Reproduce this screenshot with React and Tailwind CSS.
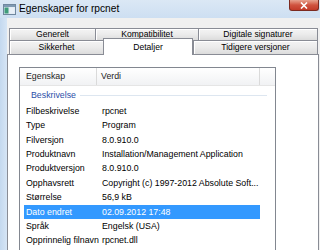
import React from "react";

const rows = [
  ["Filbeskrivelse", "rpcnet"],
  ["Type", "Program"],
  ["Filversjon", "8.0.910.0"],
  ["Produktnavn", "Installation/Management Application"],
  ["Produktversjon", "8.0.910.0"],
  ["Opphavsrett", "Copyright (c) 1997-2012 Absolute Soft..."],
  ["Størrelse", "56,9 kB"],
  ["Dato endret", "02.09.2012 17:48", true],
  ["Språk", "Engelsk (USA)"],
  ["Opprinnelig filnavn", "rpcnet.dll"],
];

function Tab({ w, children, last }) {
  return (
    <div
      className={`h-full flex items-center justify-center border-t border-l border-[#898c95] bg-gradient-to-b from-[#f4f4f4] via-[#ebebeb] to-[#dcdcdc] shadow-[inset_1px_1px_0_#ffffff] ${last ? "border-r" : ""}`}
      style={{ width: w }}
    >
      <span className="text-[8.6px] leading-none text-black">{children}</span>
    </div>
  );
}

export default function App() {
  return (
    <div
      className="w-[320px] h-[250px] overflow-hidden bg-[#cfe0f3] flex flex-col"
      style={{ fontFamily: '"Liberation Sans", Arial, sans-serif' }}
    >
      {/* title bar */}
      <div className="h-[18px] flex items-start shrink-0 bg-gradient-to-b from-[#dbe8f5] to-[#cddff2]">
        <div className="pl-[3px] pt-[4px]">
          <svg width="13" height="11" viewBox="0 0 13 11">
            <rect x="0.5" y="0.5" width="12" height="10" fill="#dfe9f3" stroke="#6f879e" />
            <rect x="1" y="1" width="11" height="2" fill="#7f9ab3" />
            <rect x="1.5" y="3.5" width="4" height="6" fill="#3f9c7a" />
            <rect x="6.5" y="3.5" width="5" height="6" fill="#e8f0f7" />
          </svg>
        </div>
        <span className="ml-[3px] mt-[3px] text-[10.2px] leading-[12px] text-black">
          Egenskaper for rpcnet
        </span>
        <div className="ml-auto mr-[1px] w-[30px] h-[11px] rounded-b-[3px] border border-t-0 border-[#7c2a20] bg-gradient-to-b from-[#e6a28f] via-[#d0533f] to-[#c23a28] flex items-center justify-center">
          <svg width="8" height="7" viewBox="0 0 8 7">
            <path d="M1 0.5 L7 6.5 M7 0.5 L1 6.5" stroke="#ffffff" strokeWidth="1.6" />
          </svg>
        </div>
      </div>

      {/* body */}
      <div className="flex flex-1 min-h-0">
        <div className="w-[7px] shrink-0 bg-gradient-to-r from-[#c4d9ef] to-[#d6e5f5]" />
        <div className="flex-1 bg-[#f0f0f0] flex flex-col pt-[10px] min-w-0">
          {/* tab row 1 */}
          <div className="flex h-[12px] ml-[2px] shrink-0">
            <Tab w={86}>Generelt</Tab>
            <Tab w={103}>Kompatibilitet</Tab>
            <Tab w={120} last>Digitale signaturer</Tab>
          </div>
          {/* tab row 2 */}
          <div className="flex h-[14px] ml-[2px] shrink-0 relative z-10">
            <Tab w={94}>Sikkerhet</Tab>
            <div className="w-[90px] h-[17px] -mt-[2px] bg-white border-t border-l border-r border-[#898c95] flex items-start justify-center pt-[4px]">
              <span className="text-[8.6px] leading-none text-black">Detaljer</span>
            </div>
            <Tab w={125} last>Tidigere versjoner</Tab>
          </div>
          {/* panel */}
          <div className="flex-1 bg-white border-t border-l border-[#898c95] pl-[11px] pt-[12px] mr-[1px] border-r">
            <div className="w-[257px] h-[200px] border border-[#828790] bg-white">
              {/* header */}
              <div className="h-[18px] flex border-b border-[#e5e5e5] bg-gradient-to-b from-[#ffffff] to-[#f1f2f4] text-[8.8px] text-[#1e1e1e]">
                <div className="w-[77px] border-r border-[#dadada] flex items-center pl-[6px]">Egenskap</div>
                <div className="w-[163px] border-r border-[#dadada] flex items-center pl-[4px]">Verdi</div>
                <div className="flex-1" />
              </div>
              {/* group */}
              <div className="h-[18px] flex items-center pl-[11px] pr-[8px]">
                <span className="text-[8.8px] text-[#2c50a8] leading-none">Beskrivelse</span>
                <div className="flex-1 h-px bg-[#dde6f0] ml-[4px]" />
              </div>
              {/* rows */}
              <div className="pl-[4px]">
                {rows.map(([k, v, sel]) => (
                  <div
                    key={k}
                    className={`h-[14.4px] w-[236px] flex items-center text-[8.8px] leading-none whitespace-nowrap ${sel ? "bg-[#3399ff] text-white" : "text-black"}`}
                  >
                    <div className="w-[78px] pl-[2px] shrink-0">{k}</div>
                    <div>{v}</div>
                  </div>
                ))}
              </div>
            </div>
          </div>
        </div>
      </div>
    </div>
  );
}
